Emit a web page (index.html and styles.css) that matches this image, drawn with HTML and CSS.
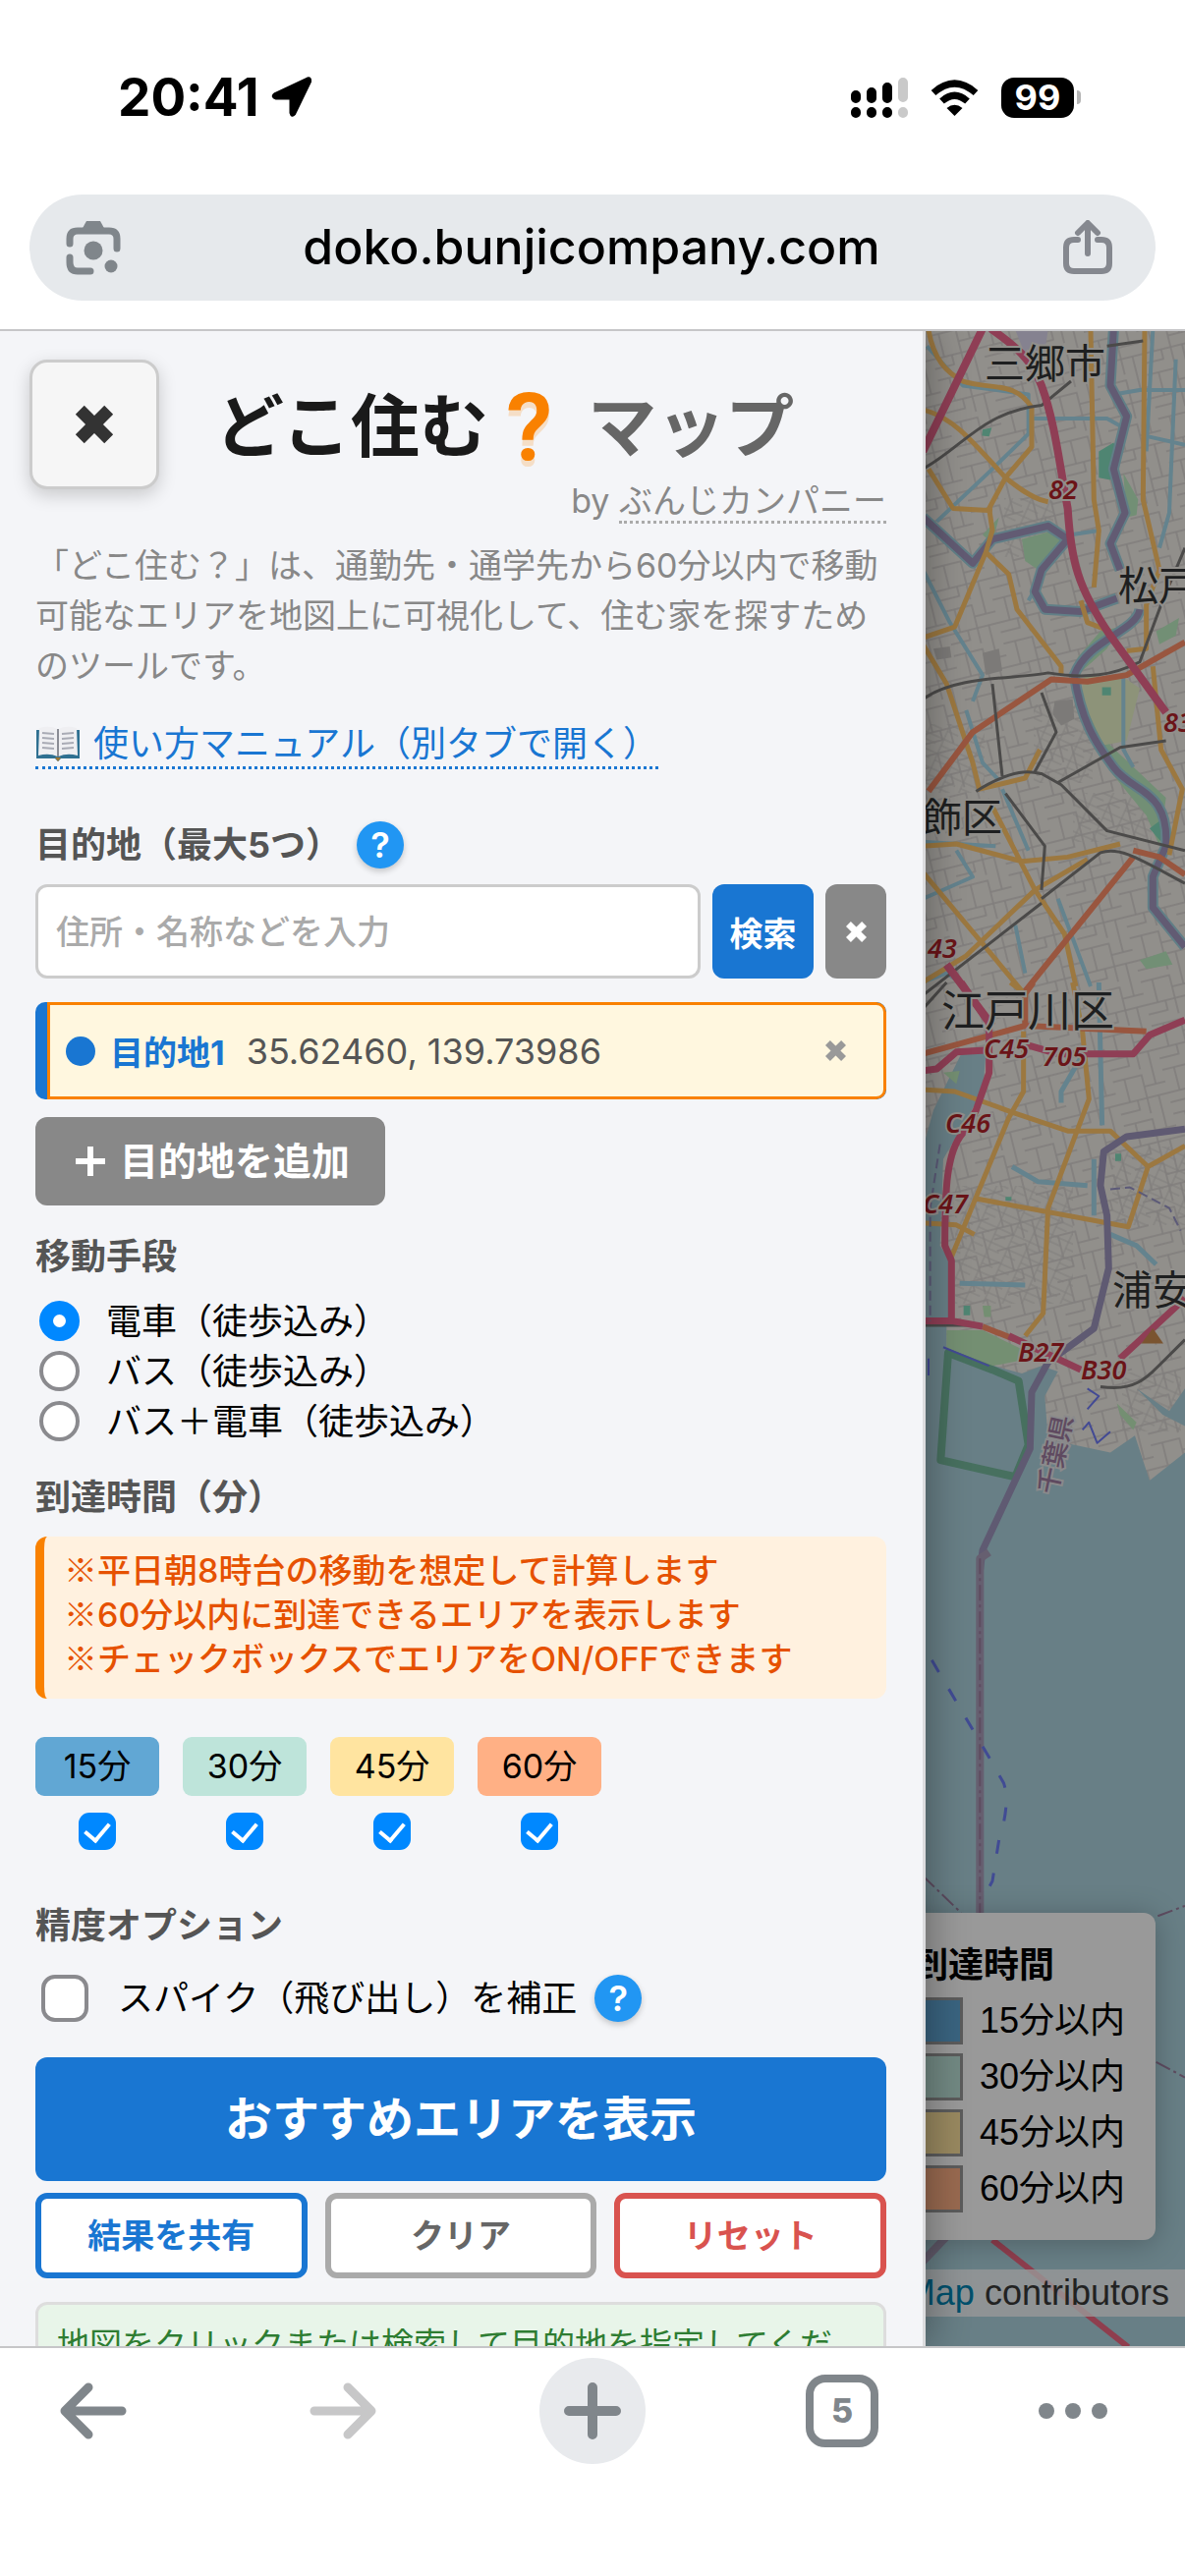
FILE: index.html
```html
<!DOCTYPE html>
<html lang="ja">
<head>
<meta charset="utf-8">
<meta name="viewport" content="width=device-width, initial-scale=1">
<title>どこ住む？マップ</title>
<link rel="stylesheet" href="styles.css">
</head>
<body>
<svg class="defs" aria-hidden="true">
  <symbol id="cross" viewBox="0 0 20 20"><path d="M3 3 17 17M17 3 3 17" fill="none" stroke="currentColor" stroke-width="6"/></symbol>
</svg>

<header class="browser-top">
  <div class="status-bar">
    <div class="status-left">
      <span>20:41</span>
      <svg class="icon-location" viewBox="0 0 42 42" aria-hidden="true"><path d="M37 2Q40 1 39.500 5L23.500 38Q21 41 20 37V22H5Q0 20.500 4 17.500Z" stroke="#000" stroke-width="3" stroke-linejoin="round"/></svg>
    </div>
    <div class="status-right">
      <svg class="icon-signal" viewBox="0 0 58 41" aria-hidden="true">
        <path d="M5 18v3M21 15v6M37 10v11M5 35v1M21 35v1M37 35v1" stroke="#000" stroke-width="10" stroke-linecap="round"/>
        <path d="M53 5v15M53 35v1" stroke="#c9c9c9" stroke-width="10" stroke-linecap="round"/>
      </svg>
      <svg class="icon-wifi" viewBox="0 0 51 37" aria-hidden="true">
        <path d="M25.500 37 17.500 29Q25.500 22.500 33.500 29Z"/>
        <path d="M4 13.500Q25.500-5.500 47 13.500M12.500 22Q25.500 10.500 38.500 22" fill="none" stroke="#000" stroke-width="7"/>
      </svg>
      <div class="battery"><span>99</span><i></i></div>
    </div>
  </div>
  <div class="address-bar">
    <button class="bare" aria-label="レンズで検索">
      <svg width="56" height="56" viewBox="0 0 56 56" aria-hidden="true">
        <g fill="none" stroke="#80868b" stroke-width="7" stroke-linecap="round">
          <path d="M4 24V19Q4 11 12 11H44Q52 11 52 19V29"/><path d="M4 38V43Q4 52 12 52H25"/>
        </g>
        <path d="M16 10 21 1H35L40 10Z" fill="#80868b"/>
        <circle cx="28" cy="31" r="9.500" fill="#80868b"/><circle cx="46" cy="47" r="6.500" fill="#80868b"/>
      </svg>
    </button>
    <span class="address">doko.bunjicompany.com</span>
    <button class="bare" aria-label="共有">
      <svg width="52" height="56" viewBox="0 0 52 56" aria-hidden="true">
        <path d="M16 20H12Q4 20 4 28V44Q4 52 12 52H40Q48 52 48 44V28Q48 20 40 20H36M26 34V4M16 13 26 3 36 13" fill="none" stroke="#85888f" stroke-width="6" stroke-linecap="round" stroke-linejoin="round"/>
      </svg>
    </button>
  </div>
</header>

<main class="app">
  <aside class="sidebar">
    <div class="sidebar-head">
      <button class="close" aria-label="閉じる"><svg width="42" height="42" aria-hidden="true"><use href="#cross"/></svg></button>
      <div class="brand">
        <h1><span>どこ住む</span><span class="question">?</span><span class="sub">マップ</span></h1>
        <p class="byline">by <a href="#company">ぶんじカンパニー</a></p>
      </div>
    </div>

    <div class="content">
      <p class="lead">「どこ住む？」は、通勤先・通学先から60分以内で移動可能なエリアを地図上に可視化して、住む家を探すためのツールです。</p>
      <a class="manual" href="#manual">
        <svg width="46" height="36" viewBox="0 0 46 36" aria-hidden="true">
          <path d="M1 4H45V33H26L23 36 20 33H1Z" fill="#2f7091"/>
          <path d="M4 2Q15-1 22.500 3V31Q14 27 3 30ZM42 2Q31-1 23.500 3V31Q32 27 43 30Z" fill="#efeff2"/>
          <path d="M7 7 19 8M7 12 19 13M7 17 19 18M7 22 19 23M27 8 39 7M27 13 39 12M27 18 39 17M27 23 39 22" stroke="#a9abb5" stroke-width="2"/>
          <path d="M23 3V31" stroke="#8a8c94" stroke-width="2"/><path d="M20 32H26L23 36Z" fill="#a0762f"/>
        </svg>
        <span>使い方マニュアル（別タブで開く）</span>
      </a>

      <section class="group spaced">
        <h2><label for="place">目的地（最大5つ）</label><button class="help" aria-label="目的地のヘルプ">?</button></h2>
        <div class="search">
          <input id="place" type="text" placeholder="住所・名称などを入力">
          <button class="btn-search">検索</button>
          <button class="btn-clear" aria-label="入力を消去"><svg width="23" height="23" aria-hidden="true"><use href="#cross"/></svg></button>
        </div>
        <div class="destination">
          <div class="destination-body">
            <i class="dot"></i><strong>目的地1</strong><span>35.62460, 139.73986</span>
            <button class="bare" aria-label="目的地1を削除"><svg width="23" height="23" aria-hidden="true"><use href="#cross"/></svg></button>
          </div>
        </div>
        <button class="btn-add"><svg width="30" height="30" viewBox="0 0 30 30" aria-hidden="true"><path d="M15 0V30M0 15H30" stroke="#fff" stroke-width="6"/></svg>目的地を追加</button>
      </section>

      <section class="group">
        <h2>移動手段</h2>
        <div class="modes">
          <label><input type="radio" name="mode" checked>電車（徒歩込み）</label>
          <label><input type="radio" name="mode">バス（徒歩込み）</label>
          <label><input type="radio" name="mode">バス＋電車（徒歩込み）</label>
        </div>
      </section>

      <section class="group">
        <h2>到達時間（分）</h2>
        <p class="notes"><i>※</i>平日朝8時台の移動を想定して計算します<br><i>※</i>60分以内に到達できるエリアを表示します<br><i>※</i>チェックボックスでエリアをON/OFFできます</p>
        <div class="times">
          <label><span class="chip t15">15分</span><input type="checkbox" class="tick" checked></label>
          <label><span class="chip t30">30分</span><input type="checkbox" class="tick" checked></label>
          <label><span class="chip t45">45分</span><input type="checkbox" class="tick" checked></label>
          <label><span class="chip t60">60分</span><input type="checkbox" class="tick" checked></label>
        </div>
      </section>

      <section class="group spaced">
        <h2>精度オプション</h2>
        <div class="option">
          <label><input type="checkbox" class="box">スパイク（飛び出し）を補正</label>
          <button class="help" aria-label="スパイク補正のヘルプ">?</button>
        </div>
      </section>

      <button class="btn-main">おすすめエリアを表示</button>
      <div class="actions">
        <button class="share">結果を共有</button>
        <button class="clear">クリア</button>
        <button class="reset">リセット</button>
      </div>
      <p class="message">地図をクリックまたは検索して目的地を指定してください。</p>
    </div>
  </aside>

  <div class="map">
    <svg class="tiles" viewBox="0 0 264 2051" preserveAspectRatio="xMinYMin slice" role="img" aria-label="地図">
      <defs>
        <pattern id="streets" width="52" height="46" patternUnits="userSpaceOnUse" patternTransform="rotate(-14)">
          <path d="M0 6H30V46M30 18H52M12 6V30H0M12 30H52M42 0V18M20 30V40H0M42 30V46" fill="none" stroke="#7f7d7c" stroke-width="1.500"/>
        </pattern>
        <pattern id="blocks" width="18" height="16" patternUnits="userSpaceOnUse" patternTransform="rotate(24)">
          <path d="M0 4H18M6 0V16M6 11H18" fill="none" stroke="#7f7d7c" stroke-width="1"/>
        </pattern>
      </defs>
      <rect width="264" height="1250" fill="#918f8b"/>
      <rect width="264" height="1250" fill="url(#streets)"/>
      <g fill="url(#blocks)"><path d="M80 170h50v60h-50zM0 400h60v70h-60zM110 380h60v80h-60zM150 470h80v50h-80zM30 870h120v120h-120zM190 830h74v80h-74zM200 1060h60v60h-60z"/></g>
      <rect y="1210" width="264" height="850" fill="#687f86"/>

      <g class="lines" transform="translate(-42 -7) scale(.3333 .4464)">
        <path fill="#858290" d="M400 13H500L490 60 430 70Z"/>
        <path fill="#728f75" d="M420 490 520 470 550 500 470 560 430 540ZM730 340 775 400 770 435 740 440ZM590 800 680 740 720 690 660 700 590 760ZM600 870 640 830 690 960 860 1080 840 1190 800 1120 690 1020ZM350 440 300 480 330 500ZM830 700 900 670 890 710 840 730ZM780 1450 860 1430 880 1460 800 1470Z"/>
        <path fill="#8d9379" d="M610 800 740 810 780 830 740 950 670 960 600 850Z"/>
        <path fill="#4f8572" d="M655 290 700 270 720 300 690 355 655 350ZM665 828H692V846H665ZM300 240 328 236 320 256 298 254ZM810 1150 845 1130V1180Z"/>
        <path fill="#7c7a78" d="M520 860 575 855 580 900 540 915 515 890ZM150 740 200 735 205 760 160 765ZM300 750 350 740 360 790 310 800Z"/>
        <path stroke="#64838e" stroke-width="4" d="M118 560 200 680 300 800 270 860M250 880 300 1000 350 1040M360 1060 440 1200M450 215H680L740 240M700 160 780 150H918M820 13 800 290M800 255 918 275M890 80 870 430 840 510M130 50 240 140 440 160V250L330 330 160 450M730 800V970L760 1010M118 1180 340 1190M118 1310 270 1260 220 1200M530 1310 630 1510M400 1370 430 1480M440 630 480 580M570 480 660 470M118 1500 190 1480 250 1510"/>
        <path stroke="#617f87" stroke-width="11" d="M700 13 690 140 740 210 700 330 735 430 690 500 720 560M118 440 270 545 330 490 500 460 560 490 480 560 460 610 490 650 600 655 710 625M780 650C770 700 620 720 580 800 600 900 640 950 700 1010 760 1070 870 1060 860 1190L820 1260V1330L918 1420"/>
        <path stroke="#625b73" stroke-width="7" d="M700 13 690 140 740 210 700 330 735 430 690 500 720 560M118 440 270 545 330 490 500 460 560 490 480 560 460 610 490 650 600 655 710 625M780 650C770 700 620 720 580 800 600 900 640 950 700 1010 760 1070 870 1060 860 1190L820 1260V1330L918 1420"/>
        <path stroke="#9c7840" stroke-width="5" d="M135 13C150 80 190 110 240 130 330 150 400 130 450 190V280L370 350 320 420 330 470 310 520 215 690 118 715M118 195C200 210 250 250 370 350 420 380 460 400 500 405M135 330 210 420 330 425M310 520 380 570 405 650 540 780V800M630 13 640 400 655 470 640 600M795 13 790 400 840 560 800 640V740L740 745M118 730 190 820 270 1000 290 1060 430 1035 475 970M330 1100 460 1290 550 1390 585 1510M118 1190 220 1185 420 1225 560 1215 720 1185M118 1500 250 1440 460 1290 620 1220M118 1250 420 1520M600 630 620 680 690 700M820 780 845 970 910 1060 870 1210"/>
        <path stroke="#99563f" stroke-width="6" d="M135 1065 270 930 510 810 620 815 740 800 918 725M760 1215 420 1530M760 1200 840 1215 918 1255"/>
        <path stroke="#4b4a49" stroke-width="3" d="M118 330C240 280 300 200 480 185L570 130M680 50 790 38M118 855C220 800 400 810 500 795 620 810 700 800 780 770L850 630 918 510M280 1065C400 1010 450 1020 480 1025L540 1050 680 1155 918 1200M330 820 360 1030M480 840 525 930 460 1020M530 1045 720 965 860 950M480 1310 660 1205C720 1190 780 1220 918 1275M118 1530 480 1320M370 1070 490 1190 480 1290"/>
        <path stroke="#8f3e55" stroke-width="8" d="M118 290 300 10M325 10C400 50 450 80 480 140 520 220 535 320 560 420 570 540 590 600 690 710L860 885M190 1460 330 1600"/>
      </g>

      <g class="lines" transform="translate(-42 663) scale(.3333 .3827)">
        <path fill="#687f86" d="M118 440 150 340 240 180 310 190 300 290 180 470 170 700 200 740V900H118ZM118 905 190 915V985L420 1040 480 1020 530 1035 490 1100 500 1215 690 1250 765 1205 810 1325 918 1250V1568H118Z"/>
        <path fill="#687f86" d="M770 1080 870 1140 918 1080V1180L850 1150Z"/>
        <path fill="#748f72" d="M190 925 300 925 420 975V1005L330 1020 190 990ZM180 240 230 235 220 270ZM300 860 325 860V890H305ZM710 1120 770 1170 760 1190 720 1150Z"/>
        <path fill="#4f8572" d="M242 860h20v25h-20zM705 455h18v20h-18zM370 570h18v10h-18z"/>
        <path stroke="#64838e" stroke-width="5" d="M655 0 665 380M600 200 540 290V320M690 670 770 700 830 750M640 470V620M230 800 430 805M390 490 470 530 620 540"/>
        <path stroke="#47705f" stroke-width="8" d="M195 985 172 1270 400 1315 440 1230 410 1060 330 1030Z"/>
        <path stroke="#9c7840" stroke-width="5" d="M118 285 215 290 390 345 560 395H690L805 490 918 435M425 130V290L380 360 205 730M575 0 605 130 625 310 500 600 485 880 430 940M280 575 745 650 805 490M118 640 220 645 275 670M385 0 430 30"/>
        <path stroke="#99563f" stroke-width="6" d="M118 190 430 115 800 130M430 115V30L455 0M300 915 400 950"/>
        <path stroke="#5f5a72" stroke-width="7" d="M918 390 740 410 670 450 660 540 680 620 685 760 640 920 500 1010 450 1090 445 1240 300 1510 292 1568"/>
        <path stroke="#4b4a49" stroke-width="3" d="M118 912H300M660 1075C780 1090 800 1050 918 950M118 70 190 0"/>
        <path stroke="#8f3e55" stroke-width="7" d="M235 0 320 110V240L280 340 240 400C190 450 185 550 185 700L205 740V905M118 235 160 230 220 185 310 180M430 165 530 190H760L810 140 918 100M118 900H205L300 915M380 940 600 1030M720 1000 918 840"/>
        <path stroke="#5c5a78" stroke-width="2" stroke-dasharray="10 5" d="M170 430 140 600V900M690 550 750 545 870 600 905 660"/>
        <path stroke="#434a94" stroke-width="2" d="M180 970 320 1020M620 1080 655 1100 620 1135M605 1190 625 1170 650 1225 690 1195M135 1000V1045"/>
        <path fill="#7a5430" d="M820 920 852 960H785Z"/>
      </g>

      <g class="lines" transform="translate(-42 1243) scale(.3333 .523)">
        <path stroke="#665f70" stroke-width="8" d="M320 0 292 12V720M118 1380 200 1325"/>
        <path stroke="#5e4c60" stroke-width="2" stroke-dasharray="16 4 3 4" d="M292 12V702M118 630 235 702M835 708 918 688M830 992 918 1022"/>
        <path stroke="#414b94" stroke-width="3" stroke-dasharray="14 20" d="M145 210 330 410 365 450Q385 490 350 560L330 640 300 675"/>
        <path stroke="#8f3e4e" stroke-width="6" d="M330 1338 745 1547"/>
      </g>

      <g class="place">
        <text x="60" y="48">三郷市</text><text x="196" y="274">松戸市</text><text x="-4" y="510">飾区</text>
        <text class="large" x="16" y="708">江戸川区</text><text x="190" y="991">浦安市</text>
      </g>
      <g class="route">
        <text x="125" y="171">82</text><text x="242" y="408">83</text><text x="2" y="638">43</text>
        <text x="59" y="740">C45</text><text x="119" y="748">705</text><text x="20" y="816">C46</text>
        <text x="-3" y="898">C47</text><text x="94" y="1049">B27</text><text x="158" y="1067">B30</text>
      </g>
      <text class="prefecture" transform="translate(133 1185) rotate(-78)">千葉県</text>
    </svg>

    <div class="legend">
      <strong>到達時間</strong>
      <div><i class="l15"></i>15分以内</div>
      <div><i class="l30"></i>30分以内</div>
      <div><i class="l45"></i>45分以内</div>
      <div><i class="l60"></i>60分以内</div>
    </div>
    <div class="attribution">© <a href="#osm">OpenStreetMap</a> contributors</div>
  </div>
</main>

<nav class="browser-bottom" aria-label="ブラウザ">
  <button class="bare" aria-label="戻る"><svg width="68" height="58" viewBox="0 0 68 58" aria-hidden="true"><path d="M63 29H6M29 5 5 29 29 53" fill="none" stroke="#80868b" stroke-width="9" stroke-linecap="round" stroke-linejoin="round"/></svg></button>
  <button class="bare" aria-label="進む"><svg width="68" height="58" viewBox="0 0 68 58" aria-hidden="true"><path d="M5 29H62M39 5 63 29 39 53" fill="none" stroke="#c7c7c8" stroke-width="9" stroke-linecap="round" stroke-linejoin="round"/></svg></button>
  <button class="bare new-tab" aria-label="新しいタブ"><svg width="58" height="58" viewBox="0 0 58 58" aria-hidden="true"><path d="M29 5V53M5 29H53" stroke="#80868b" stroke-width="10" stroke-linecap="round"/></svg></button>
  <button class="bare" aria-label="タブ一覧"><span class="tabs">5</span></button>
  <button class="bare menu" aria-label="メニュー"><svg width="70" height="16" viewBox="0 0 70 16" aria-hidden="true"><g fill="#80868b"><circle cx="8" cy="8" r="8"/><circle cx="35" cy="8" r="8"/><circle cx="62" cy="8" r="8"/></g></svg></button>
</nav>
</body>
</html>
```

FILE: styles.css
```css
* { box-sizing: border-box; }

body {
  margin: 0;
  height: 100vh;
  display: flex;
  flex-direction: column;
  background: #fff;
  color: #000;
  font-family: Inter, "Noto Sans CJK JP", sans-serif;
  font-size: 36px;
  overflow: hidden;
}

h1, h2, p { margin: 0; }
svg { display: block; flex: none; }
button, input { font-family: inherit; margin: 0; }
button { padding: 0; border: 0; }
.defs { position: absolute; width: 0; height: 0; }
.bare { background: none; display: grid; place-items: center; }

/* Browser chrome, top */
.browser-top { border-bottom: 2px solid #c6c6c8; padding-bottom: 29px; }
.status-bar { height: 198px; padding: 0 106px 0 120px; display: flex; justify-content: space-between; align-items: center; }
.status-left { display: flex; align-items: center; gap: 12px; font-size: 53px; font-weight: 700; }
.status-right { display: flex; align-items: center; gap: 22px; }
.icon-location { width: 42px; height: 42px; }
.icon-signal { width: 58px; height: 41px; }
.icon-wifi { width: 51px; height: 37px; }
.battery { display: flex; align-items: center; gap: 3px; }
.battery span { width: 74px; height: 41px; border-radius: 13px; background: #000; color: #fff; font-size: 36px; font-weight: 700; line-height: 41px; text-align: center; }
.battery i { width: 4px; height: 14px; border-radius: 0 4px 4px 0; background: #b5b5b5; }
.address-bar { height: 108px; margin: 0 30px; padding: 0 43px 0 37px; border-radius: 54px; background: #e6e9ec; display: flex; justify-content: space-between; align-items: center; }
.address { padding-bottom: 2px; font-size: 50px; font-weight: 500; }

/* App frame */
.app { flex: 1; min-height: 0; display: grid; grid-template-columns: minmax(0, 1fr) 264px; grid-template-rows: minmax(0, 1fr); overflow: hidden; }
.sidebar { position: relative; z-index: 1; overflow: hidden; padding-top: 29px; background: #f4f5f8; border-right: 3px solid #dcdcde; box-shadow: 6px 0 36px rgba(0, 0, 0, .3); }
.content { padding: 0 37px 0 36px; }

.sidebar-head { display: flex; gap: 57px; padding: 0 37px 0 30px; }
.close { width: 132px; height: 132px; border: 3px solid #ccc; border-radius: 18px; background: #f6f6f6; color: #333; display: grid; place-items: center; box-shadow: 0 6px 18px rgba(0, 0, 0, .18); }
.brand { flex: 1; }
h1 { display: flex; align-items: center; gap: 16px; height: 98px; margin-top: 20px; color: #1a1a1a; font-size: 70px; font-weight: 700; line-height: 98px; white-space: nowrap; }
.question { padding: 0 20px 0 2px; color: #f98100; font-family: Roboto, sans-serif; font-size: 96px; font-weight: 600; text-shadow: 0 6px 0 rgba(249, 129, 0, .2); }
.sub { color: #666; }
.byline { padding-top: 6px; color: #888; font-size: 34px; line-height: 40px; text-align: right; }
.byline a { display: inline-block; color: inherit; text-decoration: none; border-bottom: 3px dotted #aaa; }
.lead { margin-top: 17px; color: #888; font-size: 34px; line-height: 51px; }
.manual { display: inline-flex; align-items: center; gap: 13px; margin-top: 31px; border-bottom: 3px dotted #1976d2; color: #1976d2; line-height: 46px; text-decoration: none; vertical-align: top; }

/* Form groups */
.group { margin-top: 28px; }
.group.spaced { margin-top: 53px; }
h2 { display: flex; align-items: center; gap: 16px; margin-bottom: 16px; color: #555; font-size: 36px; font-weight: 700; line-height: 48px; }
.help { width: 48px; height: 48px; border-radius: 50%; background: #2196f3; color: #fff; font-size: 36px; font-weight: 600; line-height: 48px; box-shadow: 0 3px 6px rgba(0, 0, 0, .2); }

.search { display: flex; gap: 12px; height: 96px; }
.search input { flex: 1; min-width: 0; padding: 0 18px; border: 3px solid #ccc; border-radius: 12px; background: #fff; font-size: 34px; }
.search input::placeholder { color: #aaa; opacity: 1; font-weight: 500; }
.search button { border-radius: 12px; color: #fff; display: grid; place-items: center; }
.btn-search { width: 103px; background: #1976d2; font-size: 34px; font-weight: 700; }
.btn-clear { width: 62px; background: #888; }

.destination { margin-top: 24px; padding-left: 12px; border-radius: 10px; background: #1976d2; overflow: hidden; }
.destination-body { display: flex; align-items: center; height: 99px; padding: 0 37px 0 16px; border: 3px solid #f98100; border-radius: 0 10px 10px 0; background: #fff7df; font-size: 34px; }
.destination .dot { width: 30px; height: 30px; margin-right: 15px; border-radius: 50%; background: #1976d2; }
.destination strong { margin-right: 22px; color: #1976d2; }
.destination span { flex: 1; color: #555; font-size: 36px; }
.destination button { color: #999; }

.btn-add { display: flex; align-items: center; gap: 15px; height: 90px; margin-top: 18px; padding: 0 36px 0 41px; border-radius: 12px; background: #888; color: #fff; font-size: 39px; font-weight: 700; line-height: 48px; }

.modes label { display: flex; align-items: center; gap: 27px; height: 51px; padding-left: 4px; line-height: 48px; }
input[type="radio"], input[type="checkbox"] { appearance: none; flex: none; background: #fff; }
input[type="radio"] { width: 41px; height: 41px; border: 4px solid #8a8a8e; border-radius: 50%; }
input[type="radio"]:checked { border: 14px solid #0088ff; }

.notes { padding: 12px 20px 18px; border-left: 9px solid #f98100; border-radius: 12px; background: #fff1df; color: #e65100; font-size: 34px; font-weight: 500; line-height: 45px; }
.notes i { font-family: "Noto Sans CJK JP", sans-serif; font-style: normal; line-height: 1; }
.times { display: flex; gap: 24px; margin-top: 39px; }
.times label { display: flex; flex-direction: column; align-items: center; gap: 17px; }
.chip { width: 126px; border-radius: 9px; font-size: 34px; line-height: 60px; text-align: center; }
.t15 { background: #61a7d4; }
.t30 { background: #bee4da; }
.t45 { background: #ffe4a0; }
.t60 { background: #ffb085; }
.tick { width: 38px; height: 38px; border-radius: 11px; display: grid; place-items: center; }
.tick:checked { background: #0088ff; }
.tick:checked::after { content: ""; width: 12px; height: 20px; margin-bottom: 4px; border: solid #fff; border-width: 0 4px 4px 0; transform: rotate(40deg); }

.option { display: flex; align-items: center; gap: 18px; height: 68px; }
.option label { display: flex; align-items: center; gap: 30px; padding-left: 6px; line-height: 48px; }
.box { width: 48px; height: 48px; border: 4px solid #8a8a8e; border-radius: 14px; }

.btn-main { display: block; width: 100%; height: 126px; margin-top: 26px; border-radius: 12px; background: #1976d2; color: #fff; font-size: 48px; font-weight: 700; line-height: 120px; }
.actions { display: grid; grid-template-columns: repeat(3, 1fr); gap: 18px; margin-top: 12px; }
.actions button { height: 87px; border: 6px solid; border-radius: 12px; background: #fff; font-size: 34px; font-weight: 700; line-height: 48px; }
.actions .share { border-color: #1976d2; color: #1976d2; }
.actions .clear { border-color: #aaa; color: #666; }
.actions .reset { border-color: #d9534f; color: #d9534f; }
.message { margin-top: 24px; padding: 18px 19px; border: 3px solid #ddd; border-radius: 12px; background: #e8f5e9; color: #2e7d32; font-size: 33px; line-height: 45px; }

/* Map */
.map { position: relative; overflow: hidden; background: #687f86; }
.tiles { width: 100%; height: 100%; }
.lines path { vector-effect: non-scaling-stroke; stroke-linejoin: round; }
.lines path[stroke] { fill: none; }
.place { font-family: "Noto Sans CJK JP", sans-serif; font-size: 41px; fill: #1e1f20; stroke: #918f8b; stroke-width: 4px; paint-order: stroke; }
.place .large { font-size: 44px; }
.route { font-family: "Noto Sans", sans-serif; font-size: 27px; font-style: italic; font-weight: 600; fill: #6b1418; stroke: #918f8b; stroke-width: 4px; paint-order: stroke; }
.prefecture { font-size: 27px; font-weight: 500; fill: #5f4a60; stroke: #8a8a8c; stroke-width: 4px; paint-order: stroke; }

.legend { position: absolute; right: 30px; bottom: 108px; padding: 27px 31px 24px; border-radius: 12px; background: #999; box-shadow: 0 3px 30px rgba(0, 0, 0, .25); font-family: "Liberation Sans", "Noto Sans CJK JP", sans-serif; white-space: nowrap; }
.legend strong { display: block; line-height: 54px; }
.legend div { display: flex; align-items: center; gap: 17px; height: 57px; line-height: 48px; }
.legend i { width: 51px; height: 48px; border: 3px solid #5c5c5c; }
.l15 { background: #3a6480; }
.l30 { background: #728983; }
.l45 { background: #998960; }
.l60 { background: #996a50; }

.attribution { position: absolute; right: 0; bottom: 30px; padding: 0 16px; background: rgba(153, 153, 153, .8); color: #222; font-family: "Liberation Sans", sans-serif; line-height: 48px; white-space: nowrap; }
.attribution a { color: #00506c; text-decoration: none; }

/* Browser chrome, bottom */
.browser-bottom { display: flex; justify-content: space-between; align-items: flex-start; height: 234px; padding: 10px 83px 0 41px; border-top: 2px solid #c6c6c8; background: #fff; }
.browser-bottom button { width: 108px; height: 108px; }
.browser-bottom .menu { width: 66px; }
.browser-bottom .new-tab { border-radius: 50%; background: #e8eaed; }
.tabs { width: 74px; height: 74px; border: 8px solid #80868b; border-radius: 20px; color: #80868b; font-size: 34px; font-weight: 800; line-height: 58px; text-align: center; }
```
